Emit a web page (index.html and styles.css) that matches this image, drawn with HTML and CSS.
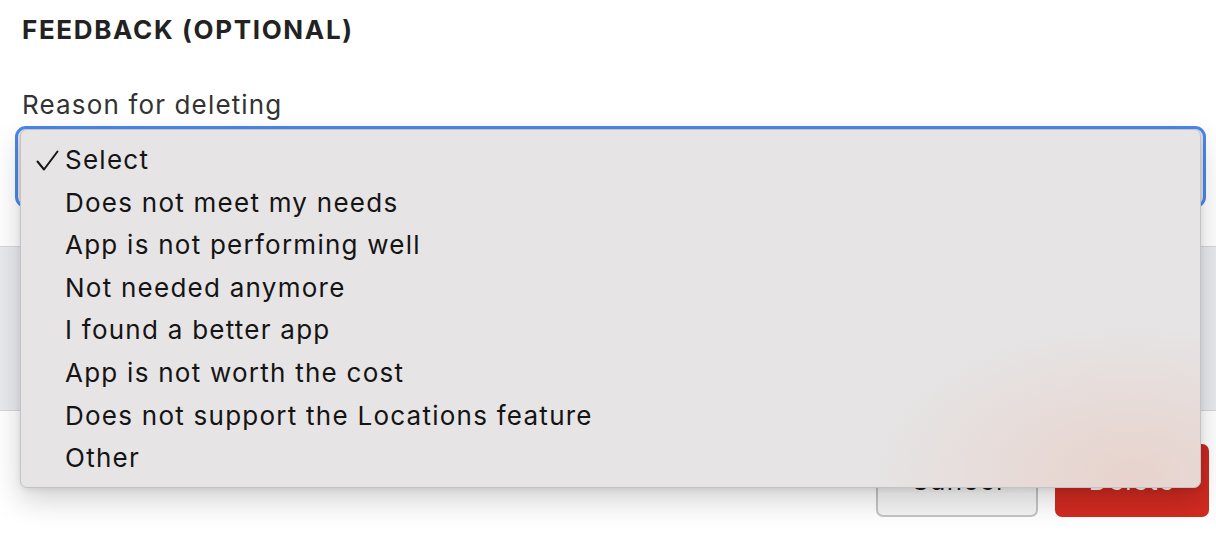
FILE: index.html
```html
<!DOCTYPE html>
<html lang="en">
<head>
<meta charset="utf-8">
<title>Feedback</title>
<link rel="stylesheet" href="styles.css">
</head>
<body>
<div class="dialog">
  <section class="feedback">
    <h2 class="title">FEEDBACK (OPTIONAL)</h2>
    <div class="label">Reason for deleting</div>
    <div class="select-wrap">
      <div class="select-box"></div>
      <ul class="menu">
        <li class="opt checked"><svg class="check" width="24" height="22" viewBox="0 0 24 22"><path d="M1.5 11.5 L8 19.5 L21.5 1.5" fill="none" stroke="#161616" stroke-width="2" stroke-linecap="round" stroke-linejoin="round"/></svg>Select</li>
        <li class="opt">Does not meet my needs</li>
        <li class="opt">App is not performing well</li>
        <li class="opt">Not needed anymore</li>
        <li class="opt">I found a better app</li>
        <li class="opt">App is not worth the cost</li>
        <li class="opt">Does not support the Locations feature</li>
        <li class="opt">Other</li>
      </ul>
    </div>
  </section>
  <div class="band"></div>
  <footer class="actions">
    <button class="btn cancel">Cancel</button>
    <button class="btn delete">Delete</button>
  </footer>
</div>
</body>
</html>
```

FILE: styles.css
```css
html, body {
  margin: 0;
  padding: 0;
  background: #ffffff;
  width: 1216px;
  height: 538px;
  overflow: hidden;
}
body {
  font-family: Inter, "Noto Sans", "Liberation Sans", sans-serif;
  color: #1f1f1f;
}
.dialog {
  display: flex;
  flex-direction: column;
}
.feedback {
  padding: 0 10px 0 15px;
}
.title {
  margin: 13px 0 0 7px;
  font-size: 26px;
  line-height: 34px;
  font-weight: 700;
  letter-spacing: 1.65px;
  color: #222222;
}
.label {
  margin: 41px 0 0 7px;
  font-size: 26px;
  line-height: 34px;
  letter-spacing: 1.15px;
  color: #333333;
}
.select-wrap {
  position: relative;
  margin-top: 4px;
}
.select-box {
  height: 76px;
  border: 3px solid #4a88ee;
  border-radius: 11px;
  background: #e6e4e5;
}
.menu {
  position: absolute;
  left: 5px;
  top: 3px;
  width: 1181px;
  height: 359px;
  box-sizing: border-box;
  margin: 0;
  padding: 9px 0 0 0;
  list-style: none;
  border: 1px solid #c4c3c4;
  border-radius: 7px;
  background:
    radial-gradient(ellipse 260px 150px at 1110px 345px, rgba(232, 208, 200, 0.85), rgba(232, 208, 200, 0) 100%),
    #e6e4e5;
  box-shadow: 0 12px 30px rgba(0, 0, 0, 0.18), 0 2px 6px rgba(0, 0, 0, 0.08);
  z-index: 2;
}
.opt {
  position: relative;
  height: 42.6px;
  line-height: 42.6px;
  padding-left: 44px;
  font-size: 26px;
  letter-spacing: 1.25px;
  color: #141414;
  white-space: nowrap;
}
.check {
  position: absolute;
  left: 15px;
  top: 11px;
}
.band {
  margin-top: 38px;
  height: 163px;
  border-top: 1px solid #d6d7da;
  border-bottom: 1px solid #d6d7da;
  background: linear-gradient(90deg, #e8eaee 0%, #eff1f4 30%, #eff1f4 70%, #e8eaee 100%);
}
.actions {
  display: flex;
  justify-content: flex-end;
  gap: 17px;
  padding: 33px 7px 0 0;
}
.btn {
  height: 73px;
  border-radius: 7px;
  font-family: Inter, "Noto Sans", "Liberation Sans", sans-serif;
  font-size: 26px;
  letter-spacing: 1.3px;
  padding: 0;
}
.cancel {
  width: 162px;
  background: linear-gradient(#ffffff, #f4f4f5);
  border: 2px solid #c2c4c8;
  color: #1e1e1e;
}
.delete {
  width: 154px;
  background: linear-gradient(#c9271f, #d22b20);
  border: none;
  color: #ffffff;
}
```
